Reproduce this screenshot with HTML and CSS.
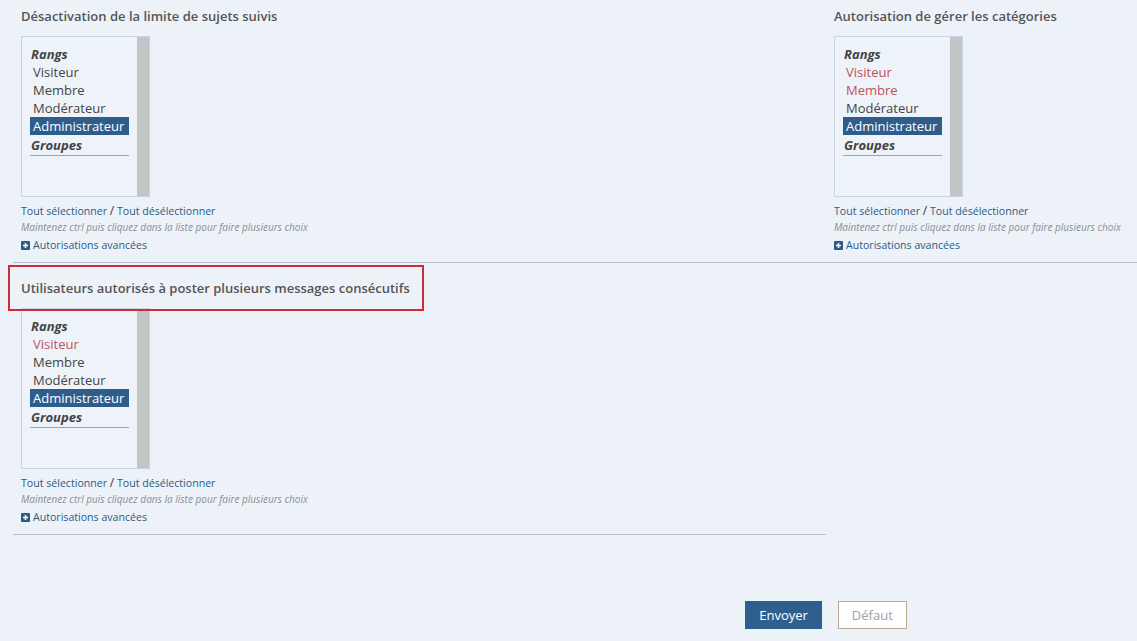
FILE: index.html
```html
<!DOCTYPE html>
<html lang="fr">
<head>
<meta charset="utf-8">
<title>Autorisations</title>
<link rel="stylesheet" href="styles.css">
</head>
<body>
<div class="page">
  <div class="grid">
    <div class="item first">
      <div class="label">Désactivation de la limite de sujets suivis</div>
      <div class="perm-box">
        <div class="list">
          <div class="grp">Rangs</div>
          <div class="opt">Visiteur</div>
          <div class="opt">Membre</div>
          <div class="opt">Modérateur</div>
          <div class="opt sel">Administrateur</div>
          <div class="grp last">Groupes</div>
        </div>
        <div class="scroll"></div>
      </div>
      <div class="links"><a>Tout sélectionner</a> <span class="slash">/</span> <a>Tout désélectionner</a></div>
      <div class="hint">Maintenez ctrl puis cliquez dans la liste pour faire plusieurs choix</div>
      <div class="adv"><span class="plus"><svg width="9" height="9" viewBox="0 0 9 9"><rect width="9" height="9" rx="1" fill="#2d5a86"/><path d="M4.5 2v5M2 4.5h5" stroke="#fff" stroke-width="1.6"/></svg></span><a>Autorisations avancées</a></div>
    </div>
    <div class="item first">
      <div class="label">Autorisation de gérer les catégories</div>
      <div class="perm-box">
        <div class="list">
          <div class="grp">Rangs</div>
          <div class="opt red">Visiteur</div>
          <div class="opt red">Membre</div>
          <div class="opt">Modérateur</div>
          <div class="opt sel">Administrateur</div>
          <div class="grp last">Groupes</div>
        </div>
        <div class="scroll"></div>
      </div>
      <div class="links"><a>Tout sélectionner</a> <span class="slash">/</span> <a>Tout désélectionner</a></div>
      <div class="hint">Maintenez ctrl puis cliquez dans la liste pour faire plusieurs choix</div>
      <div class="adv"><span class="plus"><svg width="9" height="9" viewBox="0 0 9 9"><rect width="9" height="9" rx="1" fill="#2d5a86"/><path d="M4.5 2v5M2 4.5h5" stroke="#fff" stroke-width="1.6"/></svg></span><a>Autorisations avancées</a></div>
    </div>
    <div class="item">
      <div class="label">Utilisateurs autorisés à poster plusieurs messages consécutifs</div>
      <div class="perm-box">
        <div class="list">
          <div class="grp">Rangs</div>
          <div class="opt red">Visiteur</div>
          <div class="opt">Membre</div>
          <div class="opt">Modérateur</div>
          <div class="opt sel">Administrateur</div>
          <div class="grp last">Groupes</div>
        </div>
        <div class="scroll"></div>
      </div>
      <div class="links"><a>Tout sélectionner</a> <span class="slash">/</span> <a>Tout désélectionner</a></div>
      <div class="hint">Maintenez ctrl puis cliquez dans la liste pour faire plusieurs choix</div>
      <div class="adv"><span class="plus"><svg width="9" height="9" viewBox="0 0 9 9"><rect width="9" height="9" rx="1" fill="#2d5a86"/><path d="M4.5 2v5M2 4.5h5" stroke="#fff" stroke-width="1.6"/></svg></span><a>Autorisations avancées</a></div>
    </div>
  </div>
  <div class="actions">
    <button class="btn primary">Envoyer</button>
    <button class="btn default">Défaut</button>
  </div>
  <div class="highlight"></div>
</div>
</body>
</html>
```

FILE: styles.css
```css
html, body {
  margin: 0;
  padding: 0;
  background: #edf2f9;
}
body {
  font-family: "Open Sans", "Noto Sans", sans-serif;
  color: #444;
  width: 1137px;
  height: 641px;
  overflow: hidden;
}
.page {
  position: relative;
}
.grid {
  display: grid;
  grid-template-columns: 813px 1fr;
  margin-left: 13px;
}
.item {
  padding: 15px 8px 9px 8px;
  border-bottom: 1px solid #b9c1cc;
}
.item.first {
  padding-top: 6px;
}
.label {
  font-size: 13px;
  font-weight: 600;
  line-height: 20px;
  color: #555;
  margin-bottom: 10px;
}
.perm-box {
  display: flex;
  width: 127px;
  height: 159px;
  border: 1px solid #c7d4e4;
  background: #eef3fa;
}
.list {
  flex: 1;
  padding: 8px 8px 0 8px;
}
.grp {
  font-size: 13px;
  font-weight: 700;
  font-style: italic;
  line-height: 18px;
  color: #444;
  padding-left: 1px;
}
.grp.last {
  line-height: 19px;
  border-bottom: 1px solid #9da3ab;
  margin-top: 1px;
}
.opt {
  font-size: 13px;
  line-height: 18px;
  padding-left: 3px;
  color: #444;
}
.opt.red {
  color: #c0505c;
}
.opt.sel {
  background: #2e5d8c;
  color: #fff;
}
.scroll {
  width: 12px;
  background: #c4c5c7;
}
.links {
  margin-top: 6px;
  font-size: 10.6px;
  line-height: 16px;
  color: #2d5a86;
}
.links a, .adv a {
  color: #2d5a86;
  text-decoration: none;
}
.slash {
  color: #333;
  font-size: 12px;
}
.hint {
  font-size: 10px;
  font-style: italic;
  line-height: 16px;
  color: #8a8f96;
}
.adv {
  margin-top: 2px;
  display: flex;
  align-items: center;
  gap: 3px;
  font-size: 10.6px;
  line-height: 16px;
}
.plus {
  display: inline-flex;
  width: 9px;
  height: 9px;
}
.actions {
  display: flex;
  justify-content: center;
  gap: 16px;
  padding-left: 515px;
  margin-top: 66px;
}
.btn {
  font-family: "Open Sans", "Noto Sans", sans-serif;
  font-size: 13px;
  height: 28px;
  padding: 0 13px;
  cursor: pointer;
}
.btn.primary {
  background: #2e5f8f;
  border: 1px solid #2e5f8f;
  color: #fff;
}
.btn.default {
  background: #fff;
  border: 1px solid #b7aa8e;
  color: #a3a19b;
}
.highlight {
  position: absolute;
  left: 8px;
  top: 265px;
  width: 412px;
  height: 42px;
  border: 2px solid #d22a36;
  pointer-events: none;
}
```
